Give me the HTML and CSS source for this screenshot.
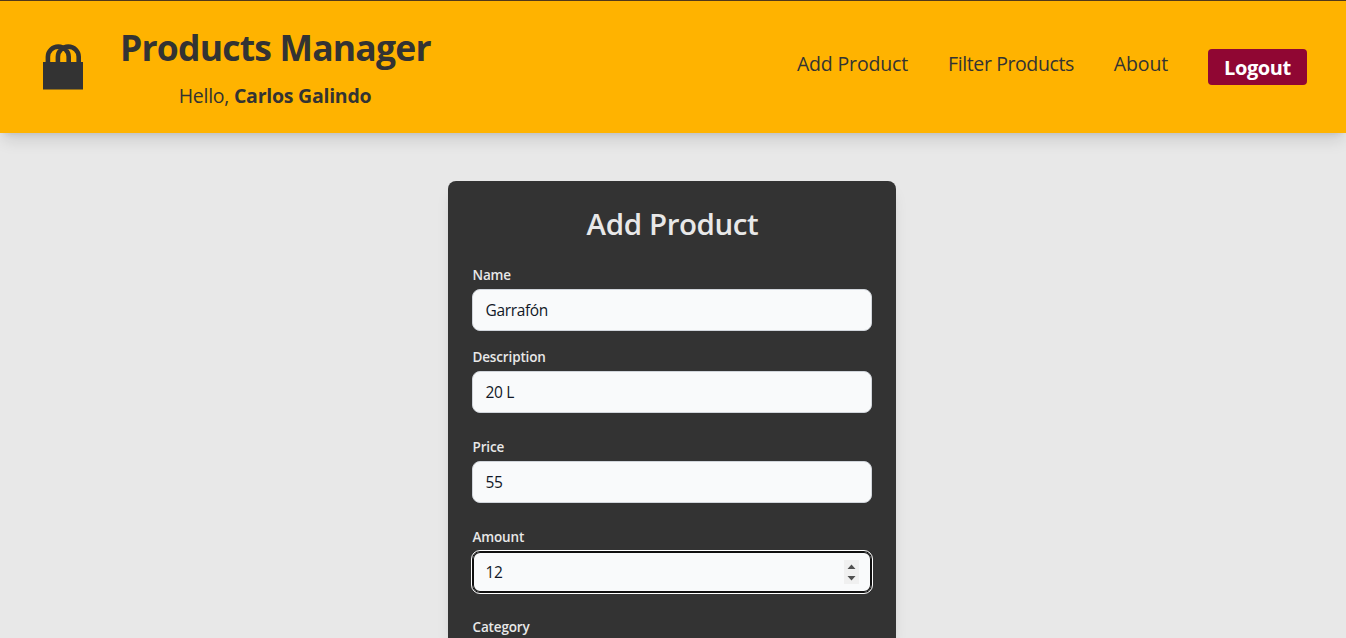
FILE: index.html
```html
<!DOCTYPE html>
<html lang="en">
<head>
<meta charset="utf-8">
<title>Products Manager</title>
<link rel="stylesheet" href="styles.css">
</head>
<body>
<header class="header">
  <svg class="logo" viewBox="0 0 40 46" aria-hidden="true">
    <path class="handle" d="M4.900 20V12.700a10.400 10.100 0 0 1 20.800 0V20M14.900 20V12.700a10.400 10.100 0 0 1 20.800 0V20"/>
    <path class="bag" d="M0 18h40v27.500H0z"/>
  </svg>
  <div class="brand">
    <h1 class="title">Products Manager</h1>
    <p class="greeting">Hello, <strong class="user">Carlos Galindo</strong></p>
  </div>
  <nav class="nav">
    <a class="link">Add Product</a>
    <a class="link filter">Filter Products</a>
    <a class="link">About</a>
    <button class="logout" type="button">Logout</button>
  </nav>
</header>
<main class="main">
  <form class="card">
    <h2 class="heading">Add Product</h2>
    <div class="field first"><label class="label">Name</label><div class="input">Garrafón</div></div>
    <div class="field"><label class="label">Description</label><div class="input">20 L</div></div>
    <div class="field"><label class="label">Price</label><div class="input">55</div></div>
    <div class="field"><label class="label">Amount</label>
      <div class="input focused">12
        <svg class="spinner" viewBox="0 0 15 24" aria-hidden="true"><path class="track" d="M0 0h15v24H0z"/><path class="arrow" d="M3.500 9l4-4.500 4 4.500zM3.500 16h8l-4 4.500z"/></svg>
      </div>
    </div>
    <label class="label">Category</label>
  </form>
</main>
</body>
</html>
```
FILE: styles.css
```css
* { box-sizing: border-box; }
body {
  margin: 0;
  height: 638px;
  overflow: hidden;
  background: #e8e8e8;
  color: #333;
  font-family: "Open Sans", "Noto Sans", sans-serif;
}
.header {
  display: flex;
  height: 133px;
  padding: 0 39px 0 43px;
  border-top: 1px solid #51391b;
  background: #ffb300;
  box-shadow: 0 10px 15px -3px rgba(0, 0, 0, .12), 0 4px 6px -4px rgba(0, 0, 0, .12);
}
.logo { width: 40px; height: 46px; margin-top: 43px; }
.handle { fill: none; stroke: #333; stroke-width: 4.600; }
.bag { fill: #333; }
.brand { width: 310px; margin-left: 37px; padding-top: 26px; text-align: center; }
.title { margin: 0; font-size: 35.500px; line-height: 40px; font-weight: 700; letter-spacing: -.8px; white-space: nowrap; }
.greeting { margin: 15px 0 0; font-size: 19.500px; line-height: 28px; white-space: nowrap; letter-spacing: -.25px; }
.user { font-weight: 700; }
.nav { display: flex; align-items: flex-start; gap: 40px; margin-left: auto; padding-top: 48px; white-space: nowrap; }
.link { font-size: 19.500px; line-height: 30px; letter-spacing: -.15px; }
.filter { letter-spacing: -.4px; }
.logout {
  width: 99px; height: 36px; padding: 2px 0 0; border: 0; border-radius: 4px;
  background: #900633; color: #fff;
  font: 700 20px/28px "Open Sans", sans-serif; letter-spacing: -.4px;
}
.main { display: flex; justify-content: center; padding: 48px 2px 0 0; }
.card {
  width: 448px; height: 457px; padding: 23px 24px 0; border-radius: 8px 8px 0 0;
  background: #333; color: #e8e8e8;
  box-shadow: 0 10px 15px -3px rgba(0, 0, 0, .1), 0 4px 6px -4px rgba(0, 0, 0, .1);
}
.heading { margin: 0 0 21px; padding-left: 1px; font-size: 29.500px; line-height: 40px; font-weight: 600; text-align: center; letter-spacing: -.4px; }
.field { margin-bottom: 24px; }
.first { margin-bottom: 16px; }
.label { display: block; height: 24px; font-size: 13.500px; line-height: 20px; font-weight: 600; letter-spacing: -.15px; padding-left: .5px; }
.input {
  display: flex; align-items: center; height: 42px; padding: 0 12px 0 12.500px; border: 1px solid #d1d5db; border-radius: 8px;
  background: #f9fafb; color: #111827; font-size: 15.500px; line-height: 24px; letter-spacing: -.35px;
}
.focused { border-color: #101010; box-shadow: inset 0 0 0 1px #101010; outline: 1px solid #fff; }
.spinner { width: 15px; height: 24px; margin-left: auto; }
.track { fill: #f0f0f0; }
.arrow { fill: #505050; }
```
